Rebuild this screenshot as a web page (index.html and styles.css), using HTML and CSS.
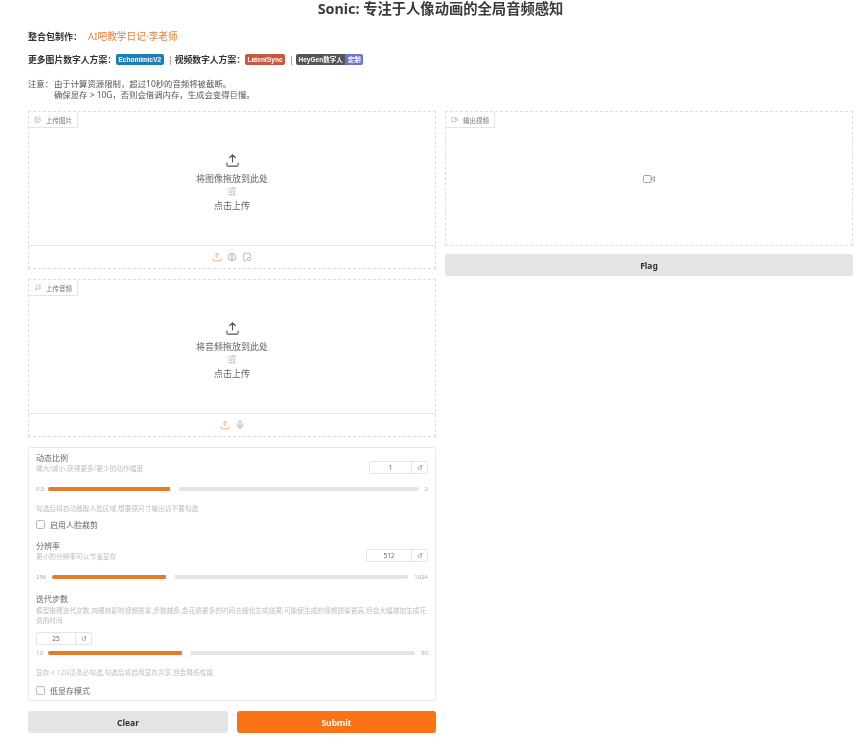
FILE: index.html
```html
<!DOCTYPE html>
<html lang="zh">
<head>
<meta charset="utf-8">
<title>Sonic</title>
<link rel="stylesheet" href="styles.css">
</head>
<body>
<h1 class="title">Sonic: 专注于人像动画的全局音频感知</h1>
<p class="line maker"><b>整合包制作：</b><span class="author">AI吧教学日记·李老师</span></p>
<p class="line links">
  <b>更多图片数字人方案：</b><span class="badge blue">EchomimicV2</span><span class="sep">|</span><b>视频数字人方案：</b><span class="badge red">LatentSync</span><span class="sep">|</span><span class="badge dark">HeyGen数字人</span><span class="badge violet">定制</span>
</p>
<div class="note"><span class="note-key">注意：</span><span>由于计算资源限制，超过10秒的音频将被截断。<br>确保显存 &gt; 10G，否则会借调内存，生成会变得巨慢。</span></div>

<main class="columns">
  <section class="col">
    <div class="drop">
      <div class="tag"><svg class="tag-icon" viewBox="0 0 24 24"><rect x="3" y="3" width="18" height="18" rx="2"/><circle cx="9" cy="9" r="2"/><path d="M21 15l-5-5L5 21"/></svg>上传图片</div>
      <div class="drop-body">
        <svg class="up" viewBox="0 0 24 24"><path d="M12 15V3M7 8l5-5 5 5M3 15v4a2 2 0 0 0 2 2h14a2 2 0 0 0 2-2v-4"/></svg>
        <span>将图像拖放到此处</span><span class="or">或</span><span>点击上传</span>
      </div>
      <div class="tools">
        <svg class="tool on" viewBox="0 0 24 24"><path d="M12 15V3M7 8l5-5 5 5M3 15v4a2 2 0 0 0 2 2h14a2 2 0 0 0 2-2v-4"/></svg>
        <svg class="tool" viewBox="0 0 24 24"><circle cx="12" cy="12" r="9"/><circle cx="12" cy="10" r="3"/><path d="M7 19c1-3 9-3 10 0"/></svg>
        <svg class="tool" viewBox="0 0 24 24"><path d="M20 11V5a2 2 0 0 0-2-2H6a2 2 0 0 0-2 2v14a2 2 0 0 0 2 2h5"/><circle cx="17" cy="17" r="4"/></svg>
      </div>
    </div>

    <div class="drop">
      <div class="tag"><svg class="tag-icon" viewBox="0 0 24 24"><path d="M9 18V5l12-2v13"/><circle cx="6" cy="18" r="3"/><circle cx="18" cy="16" r="3"/></svg>上传音频</div>
      <div class="drop-body">
        <svg class="up" viewBox="0 0 24 24"><path d="M12 15V3M7 8l5-5 5 5M3 15v4a2 2 0 0 0 2 2h14a2 2 0 0 0 2-2v-4"/></svg>
        <span>将音频拖放到此处</span><span class="or">或</span><span>点击上传</span>
      </div>
      <div class="tools">
        <svg class="tool on" viewBox="0 0 24 24"><path d="M12 15V3M7 8l5-5 5 5M3 15v4a2 2 0 0 0 2 2h14a2 2 0 0 0 2-2v-4"/></svg>
        <svg class="tool" viewBox="0 0 24 24"><rect x="9" y="2" width="6" height="12" rx="3"/><path d="M5 11a7 7 0 0 0 14 0M12 18v4"/></svg>
      </div>
    </div>

    <div class="panel">
      <div class="head">
        <div class="head-text"><div class="label">动态比例</div><div class="hint">增大/减小,获得更多/更少的动作幅度</div></div>
        <div class="num wide1"><span>1</span><i>↺</i></div>
      </div>
      <div class="slider s1"><span class="end">0.5</span><div class="track"><div class="fill" style="width:33%"></div><div class="thumb" style="left:33%"></div></div><span class="end">2</span></div>
      <div class="hint hint-gap1">勾选后将自动裁取人脸区域,想要原尺寸输出请不要勾选</div>
      <label class="check"><span class="box"></span>启用人脸裁剪</label>

      <div class="head head2">
        <div class="head-text"><div class="label">分辨率</div><div class="hint">更小的分辨率可以节省显存</div></div>
        <div class="num wide2"><span>512</span><i>↺</i></div>
      </div>
      <div class="slider s2"><span class="end">256</span><div class="track"><div class="fill" style="width:32.3%"></div><div class="thumb" style="left:32.3%"></div></div><span class="end">1024</span></div>

      <div class="label label3">迭代步数</div>
      <div class="hint hint-long">模型推理迭代次数,肉眼掠影响视频质量,步数越多,会花费更多的时间去细化生成结果,可能使生成的视频质量更高,但会大幅增加生成花费的时间</div>
      <div class="num wide3"><span>25</span><i>↺</i></div>
      <div class="slider s3"><span class="end">10</span><div class="track"><div class="fill" style="width:36.9%"></div><div class="thumb" style="left:36.9%"></div></div><span class="end">50</span></div>
      <div class="hint hint-gap2">显存 &lt; 12G请务必勾选,勾选后将启用显存共享,但会降低性能</div>
      <label class="check check2"><span class="box"></span>低显存模式</label>
    </div>

    <div class="actions">
      <button class="btn grey">Clear</button>
      <button class="btn orange">Submit</button>
    </div>
  </section>

  <section class="col">
    <div class="drop output">
      <div class="tag"><svg class="tag-icon" viewBox="0 0 24 24"><rect x="1" y="5" width="15" height="14" rx="2"/><path d="M23 7l-7 5 7 5z"/></svg>输出视频</div>
      <svg class="cam" viewBox="0 0 24 24"><rect x="1" y="5" width="15" height="14" rx="2"/><path d="M23 7l-7 5 7 5z"/></svg>
    </div>
    <button class="btn grey flag">Flag</button>
  </section>
</main>
</body>
</html>
```
FILE: styles.css
```css
* { box-sizing: border-box; }
html, body { margin: 0; }
body {
  width: 867px;
  height: 750px;
  overflow: hidden;
  padding: 0 14px 0 28px;
  background: #fff;
  color: #333;
  font-family: "Noto Sans", "Noto Sans CJK SC", sans-serif;
  font-size: 9px;
  filter: blur(0.4px);
}
.title {
  margin: 0;
  height: 20px;
  font-size: 14.3px;
  line-height: 17px;
  font-weight: 700;
  text-align: center;
  color: #3a3a3a;
}
.line { margin: 0; display: flex; align-items: center; white-space: nowrap; }
.maker { margin-top: 9px; height: 14px; }
.maker b { font-weight: 700; color: #333; }
.links b { font-weight: 700; color: #333; font-size: 8.8px; }
.author { color: #e8833a; margin-left: 6px; font-size: 9.7px; }
.links { margin-top: 9px; height: 14px; }
.badge {
  height: 11px;
  line-height: 11px;
  padding: 0 2.5px;
  font-family: "Liberation Sans", "Noto Sans CJK SC", sans-serif;
  font-size: 6.5px;
  color: #fff;
  font-weight: 700;
}
.blue { background: #1b7fb8; border-radius: 2px; }
.red { background: #c9563f; border-radius: 2px; }
.dark { background: #555; border-radius: 2px 0 0 2px; }
.violet { background: #6a73cf; border-radius: 0 2px 2px 0; padding: 0 2.5px; }
.sep { width: 3px; margin: 0 4px; color: #777; }
.note {
  display: flex;
  margin-top: 13px;
  height: 21px;
  line-height: 10.5px;
  font-size: 8.4px;
  color: #555;
}
.note-key { width: 26px; flex: none; white-space: nowrap; }

.columns {
  display: grid;
  grid-template-columns: 408px 408px;
  column-gap: 9px;
  margin-top: 11px;
  align-items: start;
}
.col { display: flex; flex-direction: column; }
.drop {
  position: relative;
  height: 158px;
  margin-bottom: 10px;
  border: 1px dashed #dcdce0;
  display: flex;
  flex-direction: column;
}
.tag {
  position: absolute;
  top: 0;
  left: 0;
  height: 16px;
  padding: 0 5px;
  display: flex;
  align-items: center;
  gap: 5px;
  border-right: 1px solid #e4e4e7;
  border-bottom: 1px solid #e4e4e7;
  font-size: 6.5px;
  color: #777;
  background: #fff;
}
.tag-icon { width: 7px; height: 7px; fill: none; stroke: #aaa; stroke-width: 2; }
.drop-body {
  flex: 1;
  display: flex;
  flex-direction: column;
  align-items: center;
  padding-top: 41px;
  color: #666;
  font-size: 9px;
  line-height: 13.3px;
}
.up { width: 15px; height: 15px; fill: none; stroke: #555; stroke-width: 1.7; margin-bottom: 4px; }
.or { color: #bbb; }
.tools {
  height: 23px;
  flex: none;
  display: flex;
  justify-content: center;
  align-items: center;
  gap: 5px;
  border-top: 1px solid #e4e4e7;
}
.tool { width: 10px; height: 10px; fill: none; stroke: #aaa; stroke-width: 2; }
.tool.on { stroke: #f0a468; }
.output { height: 135px; margin-bottom: 8px; align-items: center; justify-content: center; }
.cam { width: 12px; height: 12px; fill: none; stroke: #999; stroke-width: 1.8; }

.panel {
  height: 254px;
  padding: 4px 7px 0;
  border: 1px solid #e7e7ea;
  border-radius: 2px;
}
.head { display: flex; justify-content: space-between; align-items: flex-start; height: 24px; }
.head .num { margin-top: 9px; }
.label { font-size: 8px; line-height: 12px; color: #666; }
.hint { font-size: 6.7px; line-height: 10px; color: #bdbdc2; }
.num {
  display: flex;
  height: 13px;
  border: 1px solid #e4e4e7;
  border-radius: 2px;
  font-size: 6.5px;
  line-height: 11px;
  color: #666;
  background: #fff;
  flex: none;
}
.num span { flex: 1; text-align: center; }
.num i { width: 16px; flex: none; border-left: 1px solid #e4e4e7; text-align: center; font-style: normal; color: #888; }
.wide1 { width: 59px; }
.wide2 { width: 62px; }
.wide3 { width: 56px; margin-top: 6px; }
.slider { display: flex; align-items: center; height: 12px; }
.s1 { margin-top: 7px; }
.s2 { margin-top: 7px; }
.s3 { margin-top: 2px; }
.end { font-size: 6px; color: #aaa; flex: none; }
.track { position: relative; flex: 1; height: 4px; margin: 0 6px; background: #e4e4e7; border-radius: 2px; }
.s1 .track { margin-left: 4px; }
.s3 .track { margin-left: 5px; }
.fill { height: 4px; background: #e87b27; border-radius: 2px; }
.thumb {
  position: absolute;
  top: -3px;
  width: 9px;
  height: 10px;
  margin-left: -1px;
  background: #fff;
  border-radius: 50%;
  box-shadow: 0 0 1px #e4e4e7;
}
.hint-gap1 { margin-top: 9px; height: 10px; }
.check { display: flex; align-items: center; gap: 5px; height: 14px; margin-top: 3px; font-size: 8px; color: #666; }
.box { width: 9px; height: 9px; border: 1px solid #bbb; border-radius: 2px; }
.head2 { margin-top: 9px; }
.label3 { margin-top: 10px; }
.hint-long { margin-top: 1px; height: 20px; }
.hint-gap2 { margin-top: 9px; }
.check2 { margin-top: 5px; }

.actions { display: grid; grid-template-columns: 200px 199px; column-gap: 9px; margin-top: 10px; }
.btn {
  height: 22px;
  border: 0;
  border-radius: 3px;
  font-family: "Noto Sans", sans-serif;
  font-size: 8.5px;
  font-weight: 700;
  padding: 0;
}
.grey { background: #e4e4e7; color: #333; }
.orange { background: #f97316; color: #fff; }
.flag { width: 100%; }
```
